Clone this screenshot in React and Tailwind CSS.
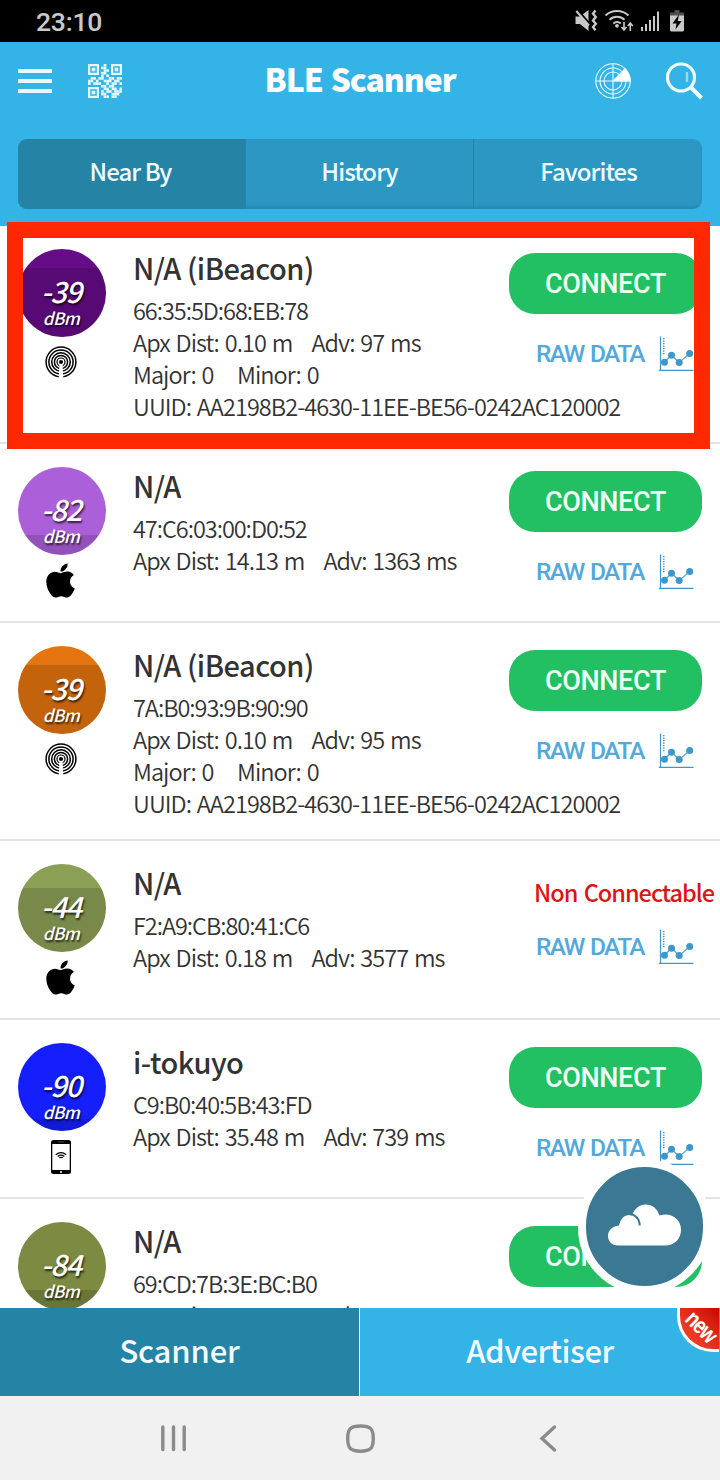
import React from "react";
import { FaApple } from "react-icons/fa";

const BEACON_UUID = "AA2198B2-4630-11EE-BE56-0242AC120002";

const devices = [
  { name: "N/A (iBeacon)", mac: "66:35:5D:68:EB:78", dist: "0.10 m", adv: "97 ms", uuid: BEACON_UUID, rssi: -39, color: "bg-[#660c86]", level: 69, kind: "beacon", connectable: true },
  { name: "N/A", mac: "47:C6:03:00:D0:52", dist: "14.13 m", adv: "1363 ms", rssi: -82, color: "bg-[#ab60d9]", level: 20, kind: "apple", connectable: true },
  { name: "N/A (iBeacon)", mac: "7A:B0:93:9B:90:90", dist: "0.10 m", adv: "95 ms", uuid: BEACON_UUID, rssi: -39, color: "bg-[#e47510]", level: 69, kind: "beacon", connectable: true },
  { name: "N/A", mac: "F2:A9:CB:80:41:C6", dist: "0.18 m", adv: "3577 ms", rssi: -44, color: "bg-[#8ca055]", level: 64, kind: "apple", connectable: false },
  { name: "i-tokuyo", mac: "C9:B0:40:5B:43:FD", dist: "35.48 m", adv: "739 ms", rssi: -90, color: "bg-[#141ffb]", level: 12, kind: "phone", connectable: true },
  { name: "N/A", mac: "69:CD:7B:3E:BC:B0", dist: "39.81 m", adv: "1162 ms", rssi: -84, color: "bg-[#7c8a42]", level: 20, kind: "apple", connectable: true },
];

function StatusIcons() {
  return (
    <svg width="114" height="26" viewBox="572 8 114 26" fill="none" stroke="#c9c9c9" strokeWidth="2">
      <path d="M575.5 16.500h4.500l8.500-6.500v21l-8.500-7h-4.500z" fill="#c9c9c9" stroke="none" />
      <path d="M577.500 10l13 15" stroke="#000" strokeWidth="2.400" />
      <path d="M576.300 11l12.700 14.500" strokeWidth="2" />
      <path d="M591.500 9v23" stroke="#000" strokeWidth="1.200" />
      <path d="M595.500 10.500l-2.500 3.300 2.800 3.200-2.800 3.500 2.800 3.200-2.800 3.300 2.500 3.300" strokeWidth="2.400" />
      <path d="M605.500 15.500a17 17 0 0 1 23 0M609.500 19.800a11 11 0 0 1 15 0M613.300 23.500a6 6 0 0 1 7.500 0" />
      <circle cx="617" cy="25.800" r="1.900" fill="#c9c9c9" stroke="none" />
      <path d="M624 22v8M621.500 27l2.500 3 2.500-3M630.300 31v-8M627.800 26l2.500-3 2.500 3" strokeWidth="1.600" />
      <path d="M642 27v4M646 24v7M650 20v11M654 16v15M658 11.500v19.500" />
      <path d="M674.500 10h5v2.500h4.500v5h-14v-5h4.500z" fill="#4f4f4f" stroke="none" />
      <path d="M670 15.500h14v14.500q0 1.500-1.500 1.500h-11q-1.500 0-1.500-1.500z" fill="#c9c9c9" stroke="none" />
      <path d="M679 14.500l-6.500 9h4l-1 6 6.200-8.500h-4z" fill="#000" stroke="none" />
    </svg>
  );
}

const qrRows = [
  ".....01......",
  ".....110.....",
  ".....011.....",
  ".....110.....",
  "0000010100000",
  "0110110011011",
  "1101001110110",
  "1011100101101",
  ".....11011000",
  ".....01101101",
  ".....10110111",
  ".....11001110",
  ".....01101100",
];

const qrFinders = [[0, 0], [23, 0], [0, 23]];

function QrIcon() {
  return (
    <svg width="34" height="34" viewBox="0 0 34 34" fill="#e4faff">
      {qrFinders.map(([x, y]) => (
        <g key={`${x}-${y}`}>
          <rect x={x + 1.1} y={y + 1.1} width="8.800" height="8.800" fill="none" stroke="#e4faff" strokeWidth="2.200" />
          <rect x={x + 3.7} y={y + 3.7} width="3.600" height="3.600" />
        </g>
      ))}
      {qrRows.flatMap((row, y) =>
        [...row].map((c, x) =>
          c === "1" ? <rect key={`${x}-${y}`} x={x * 2.615} y={y * 2.615} width="2.650" height="2.650" /> : null
        )
      )}
    </svg>
  );
}

function RadarIcon() {
  return (
    <svg width="36" height="36" viewBox="0 0 36 36" fill="none" stroke="#e6faff" strokeWidth="1.100">
      <circle cx="18" cy="18" r="17.200" />
      <circle cx="18" cy="18" r="13" />
      <circle cx="18" cy="18" r="9" />
      <path d="M18 .5v35M.5 18h35" />
      <path d="M18 18L30 5.800A17.200 17.200 0 0 1 35.200 18z" fill="#fff" />
    </svg>
  );
}

function SearchIcon() {
  return (
    <svg width="38" height="38" viewBox="0 0 38 38" fill="none" stroke="#effcff" className="mr-[-1px]">
      <circle cx="16" cy="15.500" r="13.500" strokeWidth="3.200" />
      <path d="M26 25.500l10.500 10.500" strokeWidth="4" />
      <path d="M22 10v10" stroke="#9bdcf5" strokeWidth="2.400" />
    </svg>
  );
}

function BeaconIcon() {
  return (
    <svg width="32" height="32" viewBox="0 0 32 32" fill="none" stroke="#000" strokeWidth="1.500">
      <circle cx="16" cy="16" r="14.900" />
      <circle cx="16" cy="16" r="12.100" />
      <circle cx="16" cy="16" r="9.300" />
      <circle cx="16" cy="16" r="6.600" />
      <circle cx="16" cy="16" r="4" strokeWidth="1.200" />
      <path d="M14.500 18h3l.8 14h-4.600z" fill="#fff" stroke="none" />
      <circle cx="16" cy="16" r="2.100" fill="#000" stroke="none" />
    </svg>
  );
}

function PhoneIcon() {
  return (
    <svg width="20" height="34" viewBox="0 0 20 34" fill="none" stroke="#000">
      <rect x="0" y="0" width="20" height="34" rx="2.500" fill="#000" stroke="none" />
      <rect x="1.300" y="4" width="17.400" height="26" fill="#fff" stroke="none" />
      <path d="M7 1.900h6" stroke="#777" strokeWidth=".7" />
      <path d="M4.800 14.800q5.200-4.200 10.400 0M6.700 16.500q3.300-2.600 6.600 0" strokeWidth="1.300" />
      <path d="M8.200 17.800q1.800-1 3.600 0" strokeWidth="1.200" />
      <circle cx="10" cy="32" r="1" fill="#fff" stroke="none" />
    </svg>
  );
}

function KindIcon({ kind }) {
  if (kind === "beacon") return <BeaconIcon />;
  if (kind === "phone") return <PhoneIcon />;
  return <FaApple className="mt-[-3px] h-[39px] w-[29px] text-black" preserveAspectRatio="none" />;
}

function ChartIcon() {
  return (
    <svg width="36" height="36" viewBox="0 0 36 36" fill="none" stroke="#3d98c9" className="shrink-0">
      <path d="M2.500 .5v34M.8 34.300h34.700" strokeWidth="1.200" />
      <path d="M5.700 2v17" strokeWidth="1.600" strokeDasharray="1.200 1.300" />
      <path d="M6.500 26.300L13.500 19l7.700 7.600 10.500-9.300" strokeWidth="1.100" />
      <g fill="#3d98c9" stroke="none">
        <circle cx="6.500" cy="26.300" r="3.500" />
        <circle cx="13.500" cy="19.300" r="3.500" />
        <circle cx="21.200" cy="26.600" r="3.500" />
        <circle cx="31.700" cy="17.500" r="3.500" />
      </g>
    </svg>
  );
}

function Signal({ rssi, color, level }) {
  return (
    <div className={`relative h-[88px] w-[88px] overflow-hidden rounded-full ${color}`}>
      <div className="absolute inset-x-0 bottom-0 bg-black/14" style={{ height: level }} />
      <div className="relative flex flex-col items-center pt-[25px] pr-[2px] font-medium text-white italic [text-shadow:1px_2px_2px_rgba(0,0,0,0.7)]">
        <span className="text-[29px] leading-[32px] tracking-[-1.200px]">{rssi}</span>
        <span className="text-[17px] leading-[23px] tracking-[-0.500px]">dBm</span>
      </div>
    </div>
  );
}

function DeviceRow({ d }) {
  return (
    <li className={`flex shrink-0 border-b-2 border-[#e4e4e4] ${d.uuid ? "h-[218px]" : "h-[179px]"}`}>
      <div className="flex w-[106px] shrink-0 flex-col pt-[23px] pl-[18px]">
        <Signal rssi={d.rssi} color={d.color} level={d.level} />
        <div className="mt-[9px] flex w-[85px] justify-center">
          <KindIcon kind={d.kind} />
        </div>
      </div>
      <div className="w-[375px] shrink-0 pt-[21px] pl-[27px] whitespace-nowrap text-[#333]">
        <h2 className="mb-[7px] text-[29px] leading-[40px] font-medium tracking-[-0.480px]">{d.name}</h2>
        <div className="text-[23.500px] leading-[32px] font-[350] tracking-[-0.950px] [word-spacing:1.500px]">
          <p className="tracking-[-1.050px]">{d.mac}</p>
          <p className="flex gap-[19px]">
            <span>Apx Dist: {d.dist}</span>
            <span>Adv: {d.adv}</span>
          </p>
          {d.uuid && (
            <p className="flex gap-[23.500px]">
              <span>Major: 0</span>
              <span>Minor: 0</span>
            </p>
          )}
          {d.uuid && <p>UUID: {d.uuid}</p>}
        </div>
      </div>
      <div className="flex min-w-0 grow flex-col items-start pt-[27px] pl-[28px]">
        {d.connectable ? (
          <button className="h-[61px] w-[193px] shrink-0 rounded-[26px] bg-[#23c063] font-[Roboto] text-[27px] font-medium tracking-[-0.350px] text-[#effff4]">
            <span className="block pt-px leading-[60px]">CONNECT</span>
          </button>
        ) : (
          <span className="ml-[25px] h-[50px] text-[23.500px] leading-[49px] font-medium tracking-[-1px] [word-spacing:2px] whitespace-nowrap text-[#dc1414]">Non Connectable</span>
        )}
        <div className={`ml-[27px] flex items-center gap-[15px] font-[Roboto] text-[24.500px] font-medium tracking-[-1.650px] [word-spacing:2px] text-[#55a8da] ${d.connectable ? "mt-[22px]" : "mt-[11px]"}`}>
          <span className="w-[107px] whitespace-nowrap">RAW DATA</span>
          <ChartIcon />
        </div>
      </div>
    </li>
  );
}

function Header() {
  return (
    <header className="h-[184px] shrink-0 bg-[#34b4e6] px-[18px]">
      <div className="flex h-[78px] items-center">
        <div className="flex w-[200px] items-center gap-[36px]">
          <div className="flex w-[34px] flex-col gap-[6px]">
            <i className="h-[4px] bg-[#e9fbff]" />
            <i className="h-[4px] bg-[#e9fbff]" />
            <i className="h-[4px] bg-[#e9fbff]" />
          </div>
          <QrIcon />
        </div>
        <h1 className="mt-[-6px] grow text-center text-[32px] leading-[40px] font-black tracking-[-1.100px] [word-spacing:1.500px] whitespace-nowrap text-white">BLE Scanner</h1>
        <div className="flex w-[200px] items-center justify-end gap-[34px]">
          <RadarIcon />
          <SearchIcon />
        </div>
      </div>
      <nav className="mt-[19px] flex h-[70px] overflow-hidden rounded-[9px] bg-[#2b97c2] text-center text-[24px] leading-[64px] font-medium tracking-[-0.950px] text-[#effcff] shadow-[inset_0_-5px_4px_-3px_#2885ae]">
        <a className="w-[228px] bg-[#2583a6] pr-[3px]">Near By</a>
        <a className="w-[228px] border-r border-[#2583a6]">History</a>
        <a className="w-[228px] pl-px">Favorites</a>
      </nav>
    </header>
  );
}

export default function App() {
  return (
    <div className="relative flex h-[1480px] w-[720px] flex-col overflow-hidden bg-white font-['Noto_Sans_CJK_SC',sans-serif]">
      <div className="flex h-[42px] shrink-0 items-center justify-between bg-black pr-[34px] pl-[36px] font-[Roboto] text-[26.500px] text-[#c9c9c9]">
        <span className="pt-px font-medium tracking-[-0.200px]">23:10</span>
        <StatusIcons />
      </div>
      <Header />
      <ul className="flex h-[1082px] shrink-0 flex-col overflow-hidden">
        {devices.map((d) => (
          <DeviceRow key={d.mac} d={d} />
        ))}
      </ul>
      <footer className="relative flex h-[88px] shrink-0 bg-[#34b4e6] text-center text-[31px] leading-[83px] font-medium tracking-[-0.150px] text-[#f2fcff]">
        <a className="w-[360px] border-r border-white bg-[#2583a6]">Scanner</a>
        <a className="w-[360px] tracking-[-0.450px]">Advertiser</a>
        <span className="absolute top-0 right-px flex h-[44px] w-[42px] items-center justify-center rounded-bl-[36px] border-b-[3px] border-l-[3px] border-white bg-linear-to-bl from-[#c80000] to-[#ff4a30]">
          <b className="mt-[-4px] ml-[2px] rotate-45 scale-y-125 font-['Liberation_Sans'] text-[19px] leading-[18px] font-bold tracking-[-1px] text-white">new</b>
        </span>
      </footer>
      <div className="flex h-[84px] shrink-0 items-center bg-[#f1f1f1]">
        <svg width="720" height="84" viewBox="0 1396 720 84" fill="none" stroke="#8b8b8b" strokeWidth="3.400" strokeLinecap="round">
          <path d="M162.800 1427v22.500M173.500 1427v22.500M184.200 1427v22.500" />
          <path d="M360.500 1426c10 0 12.800 2.800 12.800 12.600s-2.800 12.600-12.800 12.600-12.800-2.800-12.800-12.600 2.800-12.600 12.800-12.600z" />
          <path d="M554.500 1427l-12.500 11.500 12.500 11.500" />
        </svg>
      </div>
      <div className="absolute top-[222px] left-[7px] h-[227px] w-[703px] border-16 border-[#ff2800]" />
      <div className="absolute top-[1159px] left-[578px] flex h-[135px] w-[133px] items-center justify-center rounded-full border-8 border-white bg-[#3a7893]">
        <svg width="75" height="44" viewBox="0 0 75 44" className="mt-[-4px]">
          <path d="M11 42.500C4.500 42.500 1 38 1 33c0-5 4-10 11-10.500C13.500 16 17 12 22.500 12c1 0 2 .1 2.500.3C28 5 32.500 1.500 38.500 1.500c7 0 12 4.500 14 11 2-.6 4-.9 6-.9 9 0 15.500 7 15.500 15.200 0 9-6.500 15.700-15.500 15.700z" fill="#fff" />
          <path d="M22 11.300c5.500-.3 10.500 3.700 10.700 11.200" fill="none" stroke="#3a7893" strokeWidth="2" />
        </svg>
      </div>
    </div>
  );
}
